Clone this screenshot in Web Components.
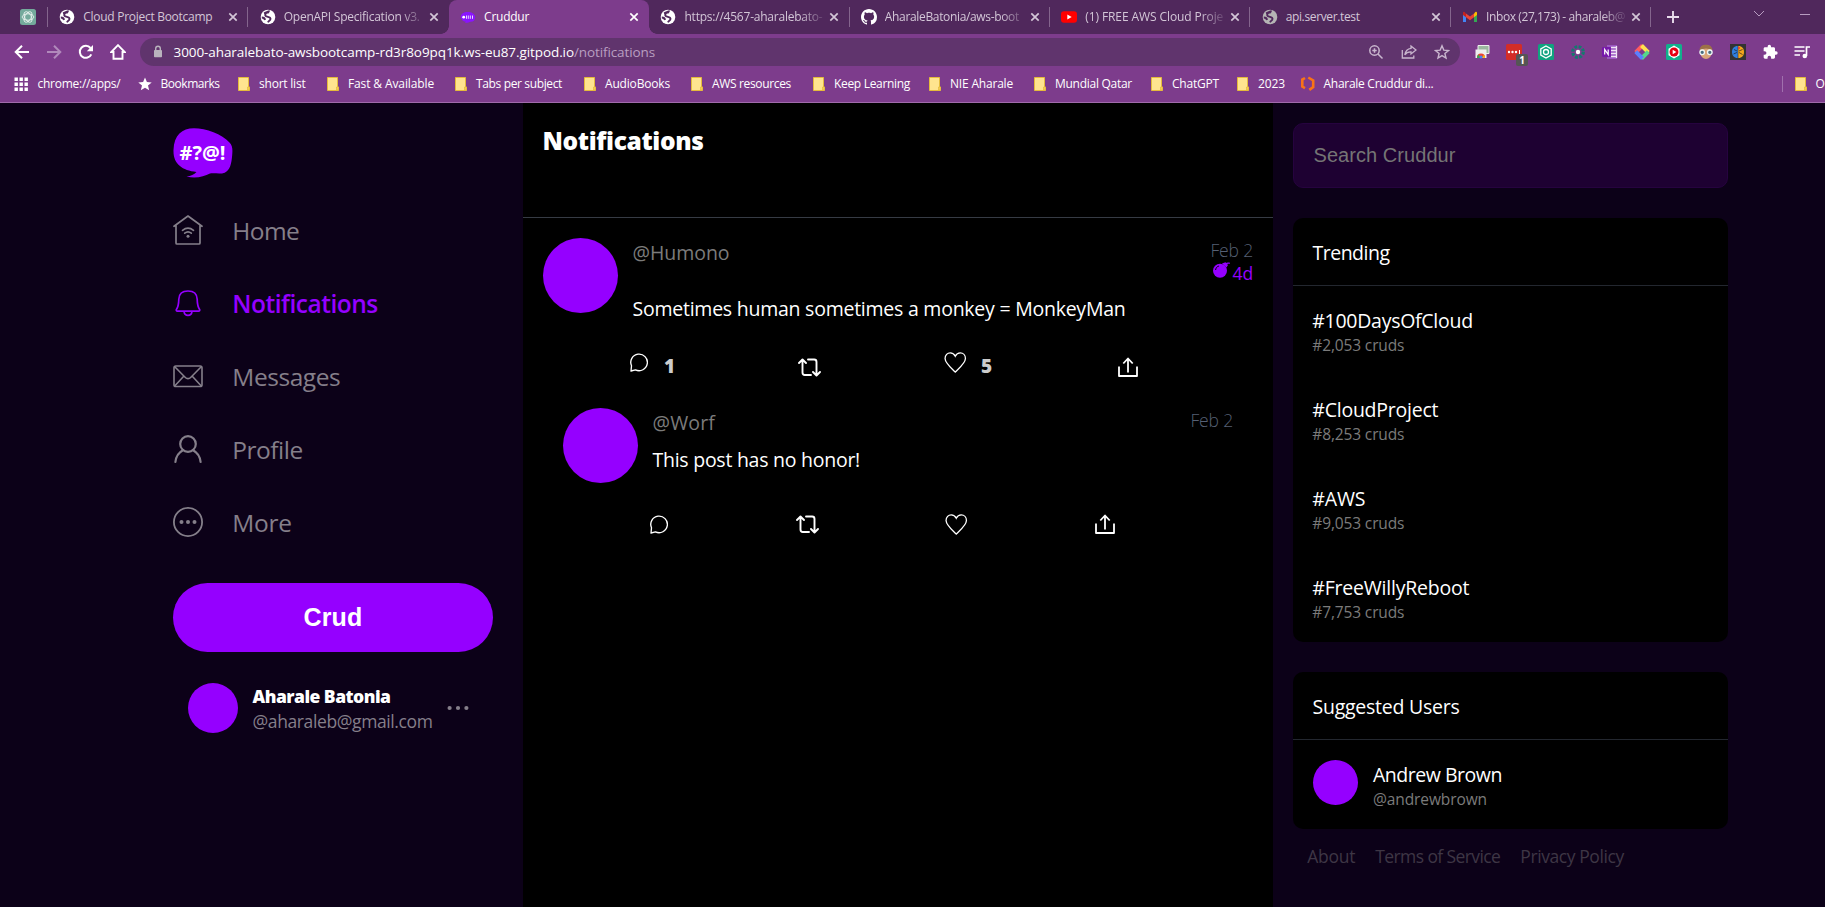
<!DOCTYPE html>
<html lang="en">
<head>
<meta charset="utf-8">
<title>Cruddur</title>
<style>
html,body{margin:0;height:100%;overflow:hidden;background:#000}
body{font-family:"Open Sans","Noto Sans",sans-serif;color:#fff}
</style>
</head>
<body>
<browser-window></browser-window>
<script>
const ICONS = {
  globe:'<svg viewBox="0 0 16 16"><circle cx="8" cy="8" r="7.300" fill="currentColor"/><path d="M4 4.300c2-.6 4-2 5.700-2M5.200 6.300C5 4 7 3.200 9 3.200M5.200 6.300c.8 2.100 5.300 1 5.300 3.500 0 2-1.800 1.800-2.500 3.500M1.800 8.500c2.300 0 3 1 3.200 2.500" fill="none" stroke="var(--hole,#50285c)" stroke-width="1.900"/></svg>',
  gpt:'<svg viewBox="0 0 16 16"><rect width="16" height="16" rx="2.500" fill="#74aa9c"/><g fill="none" stroke="#fff" stroke-width=".7"><ellipse cx="8" cy="8" rx="5.800" ry="3.200"/><ellipse cx="8" cy="8" rx="5.800" ry="3.200" transform="rotate(60 8 8)"/><ellipse cx="8" cy="8" rx="5.800" ry="3.200" transform="rotate(120 8 8)"/></g></svg>',
  crud:'<svg viewBox="0 0 16 16"><path d="M.8 7.500C1 4.500 4 3 7.500 3c4.500 0 7.800 2 7.700 5.500-.1 3-2 4.500-5 4.300-2 1.400-4 1-5.500.9l1.300-1C3 12.300.6 10.500.8 7.500z" fill="#8a14ff"/><circle cx="3.700" cy="8.200" r="1.400" fill="#fff"/><path d="M6.500 6.500v3.300M8.300 6.500v3.300M10.300 6.500v3.300M12.500 6.500v3.300" stroke="#e8d5ff" stroke-width="1"/></svg>',
  github:'<svg viewBox="0 0 16 16"><path fill="#fff" d="M8 0C3.580 0 0 3.580 0 8c0 3.540 2.290 6.530 5.470 7.590.4.070.55-.17.55-.38 0-.19-.01-.82-.01-1.490-2.010.37-2.530-.49-2.690-.94-.09-.23-.48-.94-.82-1.130-.28-.15-.68-.52-.01-.53.63-.01 1.080.58 1.230.82.72 1.210 1.870.87 2.330.66.07-.52.28-.87.51-1.070-1.780-.2-3.640-.89-3.640-3.950 0-.87.31-1.590.82-2.150-.08-.2-.36-1.020.08-2.120 0 0 .67-.21 2.200.82.64-.18 1.320-.27 2-.27s1.360.09 2 .27c1.530-1.040 2.200-.82 2.200-.82.44 1.100.16 1.920.08 2.120.51.56.82 1.270.82 2.150 0 3.070-1.870 3.750-3.650 3.950.29.25.54.73.54 1.480 0 1.070-.01 1.930-.01 2.200 0 .21.15.46.55.38A8.010 8.010 0 0 0 16 8c0-4.420-3.580-8-8-8z"/></svg>',
  youtube:'<svg viewBox="0 0 16 16"><rect y="2.200" width="16" height="11.600" rx="3" fill="#f00"/><path d="M6.300 5.500v5l4.400-2.500z" fill="#fff"/></svg>',
  gmail:'<svg viewBox="0 0 16 16"><path d="M1 4v9h3V7z" fill="#4285f4"/><path d="M15 4v9h-3V7z" fill="#34a853"/><path d="M1 3.500V6l3 2.300V4.500L2.600 3C1.800 2.600 1 3 1 3.500z" fill="#c5221f"/><path d="M4 4.500v3.800l4 3 4-3V4.500L8 7.600z" fill="#ea4335"/><path d="M15 3.500V6l-3 2.300V4.500L13.400 3c.8-.4 1.600 0 1.600.5z" fill="#fbbc04"/></svg>',
  close:'<svg viewBox="0 0 16 16"><path d="M4.300 4.300l7.400 7.400M11.700 4.300l-7.400 7.400" stroke="currentColor" stroke-width="1.700"/></svg>',
  plus:'<svg viewBox="0 0 16 16"><path d="M2 8h12M8 2v12" stroke="#e8dcec" stroke-width="1.900"/></svg>',
  chevron:'<svg viewBox="0 0 16 16"><path d="M3 5l5 5 5-5" fill="none" stroke="#b79cc0" stroke-width="1"/></svg>',
  minus:'<svg viewBox="0 0 16 16"><path d="M3 7.500h10" stroke="#b79cc0" stroke-width="1"/></svg>',
  back:'<svg viewBox="0 0 16 16"><path d="M15 8H2M8 1.700L1.700 8 8 14.300" fill="none" stroke="#fff" stroke-width="2"/></svg>',
  fwd:'<svg viewBox="0 0 16 16"><path d="M1 8h13M8 1.700L14.300 8 8 14.300" fill="none" stroke="#b189bb" stroke-width="2"/></svg>',
  reload:'<svg viewBox="0 0 16 16"><path d="M13.300 10.300A6 6 0 1 1 12.500 4" fill="none" stroke="#fff" stroke-width="2"/><path d="M15 1v6.200H8.800z" fill="#fff"/></svg>',
  home:'<svg viewBox="0 0 16 16"><path d="M8 1.200L1.300 8H3.500v6.800h9V8h2.200z" fill="none" stroke="#fff" stroke-width="1.900"/></svg>',
  lock:'<svg viewBox="0 0 16 16"><rect x="4" y="6" width="8" height="7.200" rx=".8" fill="#b9b3bd"/><path d="M5.700 7V4.600a2.300 2.300 0 0 1 4.600 0V7" fill="none" stroke="#b9b3bd" stroke-width="1.400"/></svg>',
  zoom:'<svg viewBox="0 0 16 16"><g fill="none" stroke="#c9b6ce" stroke-width="1.500"><circle cx="6.500" cy="6.500" r="4.700"/><path d="M10 10l4.500 4.500M4.300 6.500h4.400M6.500 4.300v4.400"/></g></svg>',
  share:'<svg viewBox="0 0 16 16"><g fill="none" stroke="#c9b6ce" stroke-width="1.300"><path d="M1.300 6v8h11.500v-2.500M10 2l5 4-5 4V7.800C7 7.700 5 8.800 3.800 10.800 4.500 7 6.500 4.700 10 4.300z"/></g></svg>',
  star:'<svg viewBox="0 0 16 16"><path d="M8 1.800l1.800 4.300 4.700.4-3.600 3 1.100 4.600L8 11.600l-4 2.500 1.100-4.600-3.600-3 4.700-.4z" fill="none" stroke="#c9b6ce" stroke-width="1.400"/></svg>',
  starf:'<svg viewBox="0 0 16 16"><path d="M8 1.500l1.900 4.500 4.800.4-3.700 3.200 1.200 4.700L8 11.800l-4.200 2.500L5 9.600 1.300 6.400 6.100 6z" fill="#fff"/></svg>',
  e1:'<svg viewBox="0 0 16 16"><path d="M4 1.500h11v8H4z" fill="#9bb89f" stroke="#eee"/><path d="M1.500 5.500h11v8.500h-11z" fill="#eee"/><path d="M3 13.500a4 4 0 0 1 8 0z" fill="#ea4335"/><path d="M3 13.500a4 4 0 0 1 1.500-3l2 3.500H3z" fill="#34a853"/><path d="M8 13.800l2-3a4 4 0 0 1 1 3z" fill="#fbbc04"/><circle cx="7" cy="13" r="1.500" fill="#4285f4"/></svg>',
  e2:'<svg viewBox="0 0 16 16"><rect width="16" height="16" rx="1.500" fill="#d32d27"/><circle cx="3" cy="8" r="1.200" fill="#fff"/><circle cx="6.500" cy="8" r="1.200" fill="#fff"/><circle cx="10" cy="8" r="1.200" fill="#fff"/><path d="M13.500 6v4" stroke="#fff"/></svg>',
  e3:'<svg viewBox="0 0 16 16"><rect width="16" height="16" rx="1.500" fill="#10a37f"/><g fill="none" stroke="#fff" stroke-width="1.300"><path d="M8 2l5.200 3v6L8 14l-5.200-3V5z"/><circle cx="8" cy="8" r="2.500"/></g></svg>',
  e4:'<svg viewBox="0 0 16 16"><circle cx="8" cy="8" r="5.300" fill="none" stroke="#14796f" stroke-width="3.200" stroke-dasharray="2.700 1.460"/><circle cx="8" cy="8" r="2.200" fill="#fff"/></svg>',
  e5:'<svg viewBox="0 0 16 16"><path d="M5 1h10v14H5z" fill="#9a57c0"/><path d="M9 3.500h5M9 6.500h5M9 9.500h5M9 12.500h5M14.500 2v12" stroke="#f0e6f5" stroke-width="1.300"/><rect y="3" width="9" height="10" rx="1" fill="#7719aa"/><path d="M2.700 10.500v-5l3.500 5v-5" fill="none" stroke="#fff" stroke-width="1.200"/></svg>',
  e6:'<svg viewBox="0 0 16 16"><g fill="none" stroke-width="4"><path d="M8.500 1.500L1.700 8.300" stroke="#ff5a5f"/><path d="M7.500 1.500L14.300 8.300" stroke="#ffe14d"/><path d="M14.300 7.700L7.500 14.500" stroke="#54d98c"/><path d="M8.500 14.500L1.700 7.700" stroke="#5b7fff"/></g></svg>',
  e7:'<svg viewBox="0 0 16 16"><rect width="16" height="16" rx="1.500" fill="#10b08c"/><path d="M8 1.500l5.500 3.200v6.600L8 14.500l-5.500-3.200V4.700z" fill="#fff"/><circle cx="8" cy="8" r="4.500" fill="#e60012"/><path d="M6.700 5.800v4.400L10.300 8z" fill="#fff"/></svg>',
  e8:'<svg viewBox="0 0 16 16"><path d="M2 7a6 6 0 0 1 12 0c0 5-3 8-6 8S2 12 2 7z" fill="#d9a679"/><path d="M1.500 6C2 2 5 .8 8 .8S14 2 14.500 6C10 4 6 4 1.500 6z" fill="#9b7048"/><g fill="#4a6f80" stroke="#eef5f5" stroke-width="1.300"><circle cx="4.200" cy="8.300" r="2.300"/><circle cx="11.800" cy="8.300" r="2.300"/></g></svg>',
  e9:'<svg viewBox="0 0 16 16"><rect width="16" height="16" fill="#333"/><path d="M7.700 2C4 2 2 4.500 2 8s2 6 5.700 6z" fill="#2f7fe0"/><path d="M8.300 2C12 2 14 4.500 14 8s-2 6-5.700 6z" fill="#f3a51c"/><path d="M4 5.500l3 1.500M3.500 10l3.500-1.500M12.500 5.500L9 7M12.500 10.500L9 8.500" stroke="#222" stroke-width=".7"/><circle cx="9" cy="4" r="1" fill="#e33"/></svg>',
  puzzle:'<svg viewBox="0 0 24 24"><path fill="#fff" d="M21 11h-1.500V7c0-1.100-.9-2-2-2h-4V3.500a2.500 2.500 0 0 0-5 0V5h-4c-1.100 0-2 .9-2 2v3.800H4a2.700 2.700 0 0 1 0 5.400H2.500V20c0 1.100.9 2 2 2h3.800v-1.500a2.700 2.700 0 0 1 5.400 0V22h3.800c1.100 0 2-.9 2-2v-4H21a2.500 2.500 0 0 0 0-5z"/></svg>',
  media:'<svg viewBox="0 0 16 16"><g fill="none" stroke="#fff" stroke-width="1.700"><path d="M.5 3h10M.5 7h10M.5 11h5.500M12.500 12V3h3.500"/></g><circle cx="10.800" cy="12" r="2.300" fill="#fff"/></svg>',
  apps:'<svg viewBox="0 0 16 16"><path fill="#fff" d="M1.500 1.500h3.400v3.400H1.500zM6.500 1.500h3.400v3.400H6.500zM11.500 1.500h3.400v3.400h-3.400zM1.500 6.500h3.400v3.400H1.500zM6.500 6.500h3.400v3.400H6.500zM11.500 6.500h3.400v3.400h-3.400zM1.500 11.500h3.400v3.400H1.500zM6.500 11.500h3.400v3.400H6.500zM11.500 11.500h3.400v3.400h-3.400z"/></svg>',
  folder:'<svg viewBox="0 0 16 16"><path d="M2.500 1.500h10v9.500h1v3.500h-11z" fill="#ffe48f" stroke="#e5bb3c"/><path d="M11.500 14v-3h2v3z" fill="#f4cd55" stroke="#e5bb3c" stroke-width=".7"/></svg>',
  hive:'<svg viewBox="0 0 16 16"><path d="M5 2L2.300 3.600v6.900l2.700 1.600M8.300 1.500l4.900 2.900v6.700L9.300 13.900" fill="none" stroke="#f97316" stroke-width="2.600"/></svg>',
  nhome:'<svg viewBox="0 0 30 30"><g fill="none" stroke="currentColor" stroke-width="1.700" stroke-linejoin="round" stroke-linecap="round"><path d="M1 11.300L15 1l14 10.300M3 10.500V28c0 .7.400 1 1 1h22c.6 0 1-.3 1-1V10.500"/><path d="M9.500 15.300c3.500-2.700 7.500-2.700 11 0M11.700 18.200c2-1.600 4.600-1.600 6.600 0"/></g><circle cx="15" cy="21.300" r="1.500" fill="currentColor"/></svg>',
  nbell:'<svg viewBox="0 0 30 30"><g fill="none" stroke="currentColor" stroke-width="1.700" stroke-linejoin="round"><path d="M5.800 11.200C6 6 9.500 3 15 3s9 3 9.200 8.200c.1 5.300.8 8 2.400 10.300.4.800 0 1.700-1 1.700H4.400c-1 0-1.400-.9-1-1.700 1.600-2.300 2.300-5 2.400-10.300zM11 23.300c.3 2.700 1.800 4 4 4s3.700-1.300 4-4"/></g></svg>',
  nmail:'<svg viewBox="0 0 30 30"><g fill="none" stroke="currentColor" stroke-width="1.600" stroke-linejoin="round"><rect x="1" y="5" width="28" height="20.500" rx="1.800"/><path d="M1.500 5.500l10.600 10.700c1.800 1.900 4 1.900 5.800 0L28.500 5.500M1.700 25l9-9.700M28.300 25l-9-9.700"/></g></svg>',
  nuser:'<svg viewBox="0 0 30 30"><g fill="none" stroke="currentColor" stroke-width="2.200" stroke-linecap="round"><circle cx="15" cy="10" r="7.800"/><path d="M2.400 28C3 22.300 5.600 18.500 9.900 16.200M27.600 28C27 22.300 24.400 18.500 20.100 16.200"/></g></svg>',
  nmore:'<svg viewBox="0 0 30 30"><circle cx="15" cy="15" r="14.100" fill="none" stroke="currentColor" stroke-width="1.800"/><g fill="currentColor"><circle cx="8.500" cy="15" r="2"/><circle cx="15" cy="15" r="2"/><circle cx="21.500" cy="15" r="2"/></g></svg>',
  dots:'<svg viewBox="0 0 22 6"><g fill="currentColor"><circle cx="2.600" cy="3" r="2.100"/><circle cx="11" cy="3" r="2.100"/><circle cx="19.400" cy="3" r="2.100"/></g></svg>',
  comment:'<svg viewBox="0 0 18 19"><path d="M1 18l.5-5.200A8.300 8.300 0 1 1 5.500 16.900z" fill="none" stroke="#fff" stroke-width="1.350" stroke-linejoin="round"/></svg>',
  repost:'<svg viewBox="0 0 23 19"><g fill="none" stroke="#fff" stroke-width="1.900" stroke-linejoin="round" stroke-linecap="round"><path d="M1 5l3.500-3.500L8 5M4.500 2v12.500c0 1.700.8 2.500 2.300 2.500H13M10 1.500h6.200c1.500 0 2.300.8 2.300 2.500v12.500M15 14l3.500 3.500L22 14"/></g></svg>',
  heart:'<svg viewBox="0 0 22 21"><path d="M11 20C8 16.800 1 11.500.8 6.500.8 3 3.200.8 6 .8c2.500 0 4 1.400 5 3.400 1-2 2.500-3.400 5-3.400 2.800 0 5.200 2.200 5.200 5.700C21 11.500 14 16.800 11 20z" fill="none" stroke="#fff" stroke-width="1.300"/></svg>',
  up:'<svg viewBox="0 0 20 20"><path d="M1 9.500V19h18V9.500M10 15.500V2M5.300 6.500L10 1.500l4.700 5" fill="none" stroke="#fff" stroke-width="1.800" stroke-linejoin="round"/></svg>',
  bomb:'<svg viewBox="0 0 17 16"><circle cx="7" cy="8.800" r="7" fill="#9500ff"/><path d="M9 1.500l4.500 4 1.500-2.500-2.500-2.800z" fill="#9500ff"/><path d="M13 2c1-1.500 2-1 3.800-.7" fill="none" stroke="#9500ff" stroke-width="1.300"/><path d="M2.600 8c.2-2 1.400-3.500 3.300-4" fill="none" stroke="#000" stroke-width="1"/></svg>'
};

function define(name, css, html, ready) {
  customElements.define(name, class extends HTMLElement {
    connectedCallback() {
      if (this.shadowRoot) return;
      const root = this.attachShadow({mode: 'open'});
      const body = typeof html === 'function' ? html(this) : html;
      root.innerHTML = `<style>*{box-sizing:border-box}${css}</style>${body}`;
      if (ready) ready(this, root);
    }
  });
}
const at = (el, n, d = '') => el.getAttribute(n) ?? d;

/* Single-line label; "w" is the width its letters are tracked to. */
define('fit-text', ':host{display:block;white-space:nowrap}span{display:inline-block;line-height:inherit;vertical-align:top}', '<span><slot></slot></span>',
  (el, root) => {
    const w = +at(el, 'w', 0), s = root.querySelector('span');
    if (w) s.style.letterSpacing = ((w - s.getBoundingClientRect().width) / el.textContent.length).toFixed(3) + 'px';
  });

define('ui-icon', ':host{display:block;flex:none;width:16px;height:16px}svg{display:block;width:100%;height:100%}', el => ICONS[at(el, 'name')]);
define('ui-avatar', ':host{display:block;flex:none;border-radius:50%;background:#9500ff;width:var(--size);height:var(--size)}', '');

define('browser-tab', `
:host{display:flex;align-items:center;width:200.4px;flex:none;height:34px;padding-left:11.300px;color:#d3c6d7;font-size:12px;line-height:34px;position:relative}
:host([sep])::after{content:"";width:1px;height:20px;background:#84658d;margin-left:auto}
:host([active]){background:#7d3c8c;color:#fff;border-radius:8px 8px 0 0}
:host([active])::before,:host([active]) i{content:"";position:absolute;bottom:0;width:8px;height:8px}
:host([active])::before{left:-8px;background:radial-gradient(circle at 0 0,transparent 7.5px,#7d3c8c 8px)}
:host([active]) i{right:-8px;background:radial-gradient(circle at 100% 0,transparent 7.5px,#7d3c8c 8px)}
.t{width:140px;margin:0 2px 0 8px;overflow:hidden}
:host([fade]) .t{-webkit-mask:linear-gradient(90deg,#000 116px,rgba(0,0,0,.15) 139px)}`,
 el => `<ui-icon name="${at(el,'icon')}" style="${at(el,'tint')}"></ui-icon><div class="t"><fit-text w="${at(el,'w')}">${at(el,'label')}</fit-text></div><ui-icon name="close"></ui-icon><i></i>`);

define('tab-strip', ':host{display:flex;height:34px;background:#50285c}.p{width:48px;display:flex;align-items:center;padding-left:20px}.p::after{content:"";width:1px;height:20px;background:#84658d;margin-left:11px}.e{display:flex;align-items:center;padding-left:13.500px}',
`<div class="p"><ui-icon name="gpt"></ui-icon></div>
<browser-tab icon="globe" label="Cloud Project Bootcamp" w="129" tint="color:#fff" sep></browser-tab>
<browser-tab icon="globe" label="OpenAPI Specification v3." w="136" tint="color:#fff" fade></browser-tab>
<browser-tab icon="crud" label="Cruddur" w="45" active></browser-tab>
<browser-tab icon="globe" label="https://4567-aharalebato-" w="138" tint="color:#fff" fade sep></browser-tab>
<browser-tab icon="github" label="AharaleBatonia/aws-boot" w="134" fade sep></browser-tab>
<browser-tab icon="youtube" label="(1) FREE AWS Cloud Proje" w="138" fade sep></browser-tab>
<browser-tab icon="globe" label="api.server.test" w="74" tint="color:#b5b5b5" sep></browser-tab>
<browser-tab icon="gmail" label="Inbox (27,173) - aharaleb@" w="139" fade sep></browser-tab>
<div class="e"><ui-icon name="plus"></ui-icon><ui-icon name="chevron" style="margin:-6px 0 0 70px"></ui-icon><ui-icon name="minus" style="margin:-4px 0 0 30px"></ui-icon></div>`);

define('address-bar', `
:host{display:flex;height:36px;align-items:center}
.n{display:flex;gap:16px;padding:0 14px;width:140px}
.o{display:flex;width:1320px;height:28px;border-radius:14px;background:#60346d;align-items:center;padding:0 10px;font-size:13.500px;line-height:28px}
.o fit-text+fit-text{color:#b99fc1}
.r{display:flex;gap:17px;margin-left:auto}
.x{display:flex;gap:16px;margin-left:14px}.b{position:relative}
.b span{position:absolute;left:10px;top:10px;width:12px;height:12px;border-radius:2px;background:#555;font:bold 10px/12px "Open Sans",sans-serif;text-align:center}`,
`<div class="n"><ui-icon name="back"></ui-icon><ui-icon name="fwd"></ui-icon><ui-icon name="reload"></ui-icon><ui-icon name="home"></ui-icon></div>
<div class="o"><ui-icon name="lock"></ui-icon><fit-text w="400.500" style="margin-left:7.500px">3000-aharalebato-awsbootcamp-rd3r8o9pq1k.ws-eu87.gitpod.io</fit-text><fit-text w="81">/notifications</fit-text>
<div class="r"><ui-icon name="zoom"></ui-icon><ui-icon name="share"></ui-icon><ui-icon name="star"></ui-icon></div></div>
<div class="x"><ui-icon name="e1"></ui-icon><div class="b"><ui-icon name="e2"></ui-icon><span>1</span></div>${['e3','e4','e5','e6','e7','e8','e9','puzzle','media'].map(n=>`<ui-icon name="${n}"></ui-icon>`).join('')}</div>`);

/* icon, label, label width, distance to the next icon, icon-to-label gap */
const MARKS = [['apps','chrome://apps/',83,123.500,8.500],['starf','Bookmarks',59,99,8],['folder','short list',46.500,89,7.500],['folder','Fast &amp; Available',86,128,7.500],['folder','Tabs per subject',86,129,7.500],['folder','AudioBooks',65,107,7.500],['folder','AWS resources',79,122,7.500],['folder','Keep Learning',76,116,7.500],['folder','NIE Aharale',63,105,7.500],['folder','Mundial Qatar',77,117,7.500],['folder','ChatGPT',47,86,7.500],['folder','2023',27,65.500,7.500],['hive','Aharale Cruddur di...',110,150,7.500]];
define('bookmark-bar', `
:host{display:flex;height:32px;padding:0 0 0 13px;font-size:12px;font-weight:500;line-height:30px;overflow:hidden}
div{display:flex;align-items:center;flex:none;height:28px}
.l{margin-left:auto;width:43.500px}.l i{flex:none;width:1px;height:16px;background:#a070ad;margin-right:10px}`,
 MARKS.map(m=>`<div style="width:${m[3]}px;gap:${m[4]}px"><ui-icon name="${m[0]}"></ui-icon><fit-text w="${m[2]}">${m[1]}</fit-text></div>`).join('') +
 `<div class="l"><i></i><ui-icon name="folder"></ui-icon><fit-text style="margin-left:7px">O</fit-text></div>`);

define('browser-chrome', ':host{display:block;box-sizing:border-box;height:103px;background:#7d3c8c;border-bottom:1px solid #a06bab}', '<tab-strip></tab-strip><address-bar></address-bar><bookmark-bar></bookmark-bar>');

define('nav-item', ':host{display:flex;align-items:center;height:73px;color:#857f8a;font-size:24.500px;line-height:30px}:host([active]){color:#9500ff;font-weight:600}ui-icon{width:30px;height:30px;margin:-1px 29.300px 0 0}',
 el => `<ui-icon name="${at(el,'icon')}"></ui-icon><fit-text w="${at(el,'w')}">${at(el,'label')}</fit-text>`);

define('cruddur-logo', ':host{display:block;width:60px;height:50px}svg{display:block}text{font:700 20px "Open Sans",sans-serif;fill:#fff}',
 '<svg width="60" height="50" viewBox="0 0 60 50"><path d="M.5 22C1 7 9 .3 21 .3c12 0 28 6 35.500 14.200 3 3.300 3.200 6.500 2.700 12.500-.8 9-2 15-7.500 17.700-4.500 1.800-9.500.2-14.700.8C31 48.500 23 51 13.500 48.600c4.500-.8 7.500-2 10-4.600C9 42.500 0 36 .5 22z" fill="#9500ff"/><text x="6.500" y="32" textLength="46" lengthAdjust="spacingAndGlyphs">#?@!</text></svg>');

define('side-nav', `
:host{display:block;width:523px;background:#0c0118;padding:25px 30px 0 173px}
nav{margin-top:16px}
.c{display:flex;align-items:center;justify-content:center;margin-top:24px;height:69px;padding-bottom:2px;width:320px;border-radius:35px;background:#9500ff;font:bold 25px/30px "Liberation Sans",sans-serif}
.p{display:flex;align-items:center;margin:30px 0 0 15px;line-height:25px;font-size:17.500px;color:#857f8a}
.p div{width:194px;padding:2px 0 0 14.500px}.p b{color:#fff;font-weight:800}
.p ui-icon{width:22px;height:6px}`,
`<cruddur-logo></cruddur-logo>
<nav><nav-item icon="nhome" label="Home" w="67"></nav-item><nav-item icon="nbell" label="Notifications" w="145.500" active></nav-item><nav-item icon="nmail" label="Messages" w="108"></nav-item><nav-item icon="nuser" label="Profile" w="70.500"></nav-item><nav-item icon="nmore" label="More" w="59.500"></nav-item></nav>
<div class="c"><fit-text w="59">Crud</fit-text></div>
<div class="p"><ui-avatar style="--size:50px"></ui-avatar><div><b><fit-text w="138">Aharale Batonia</fit-text></b><fit-text w="180">@aharaleb@gmail.com</fit-text></div><ui-icon name="dots" style="margin-left:14.500px"></ui-icon></div>`);

define('crud-post', `
:host{display:flex;gap:14.500px;padding:20px 20px 0;font-size:19.500px;line-height:24px;height:170px;box-sizing:border-box}
.b{flex:1;padding-top:3px}.h{display:flex;justify-content:space-between;height:24px;color:#7b7b7b}
.d{font-size:17.500px;line-height:20px;font-weight:300;color:#566075;display:flex;flex-direction:column;align-items:flex-end;margin-top:-1px}
.e{display:flex;color:#9500ff;font-weight:400;margin-top:3px;gap:2px}.e ui-icon{width:17px;height:16px;margin:-1px 1px 0 0}
.a{display:grid;margin-left:-2.500px;align-items:start}.a div{display:flex}
.a fit-text{font-weight:800;color:#ccc;font-size:19px}`,
 el => { const r = el.hasAttribute('reply');
  const ic = (n,w,h,mt) => `<ui-icon name="${n}" style="width:${w}px;height:${h}px;margin-top:${mt}px"></ui-icon>`;
  const cnt = (n,ml) => n ? `<fit-text style="margin:2px 0 0 ${ml}px">${n}</fit-text>` : '';
  return `<ui-avatar style="--size:75px"></ui-avatar><div class="b">
<div class="h"><fit-text w="${at(el,'hw')}">${at(el,'handle')}</fit-text><div class="d"><fit-text w="42.500">Feb 2</fit-text>${r?'':'<div class="e"><ui-icon name="bomb"></ui-icon><fit-text w="20.500">4d</fit-text></div>'}</div></div>
<div style="margin-top:${r?13:32}px"><fit-text w="${at(el,'w')}"><slot></slot></fit-text></div>
<div class="a" style="margin-top:${r?42:31}px;grid-template-columns:${r?'146px 149px 150px':'168px 146px 174px'} auto"><div>${ic('comment',18,19,1)}${cnt(at(el,'replies'),16)}</div><div>${ic('repost',23,19,r?1:6)}</div><div>${ic('heart',22.500,21,0)}${cnt(at(el,'likes'),14.500)}</div><div>${ic('up',20,20,r?0:5)}</div></div></div>`; },
 (el, root) => {
  /* the message arrives through the slot, so it is tracked from the post itself */
  const s = root.querySelector('slot').parentNode.shadowRoot.querySelector('span');
  s.style.letterSpacing = '0';
  s.style.letterSpacing = ((+at(el,'w') - s.getBoundingClientRect().width) / el.textContent.length).toFixed(3) + 'px';
 });

define('notification-feed', ':host{display:block;width:750px;background:#000}header{height:115px;padding:23px 20px 0 19.500px;border-bottom:1px solid #363b44;font-size:24.500px;line-height:30px;font-weight:800}',
`<header><fit-text w="161">Notifications</fit-text></header>
<crud-post handle="@Humono" hw="97" w="493" replies="1" likes="5">Sometimes human sometimes a monkey = MonkeyMan</crud-post>
<crud-post handle="@Worf" hw="62.500" w="207.500" reply style="margin:0 20px">This post has no honor!</crud-post>`);

define('side-card', ':host{display:block;background:#000;border-radius:10px;margin-top:30px;font-size:19.500px;line-height:24px}header{height:68px;padding:23px 19.500px 0;border-bottom:1px solid #23272f}',
 el => `<header><fit-text w="${at(el,'w')}">${at(el,'label')}</fit-text></header><slot></slot>`);
define('trend-item', ':host{display:block;box-sizing:border-box;height:89px;padding:23px 19.300px 0}div{font-size:15.500px;line-height:20px;color:#7b7b7b;margin-top:2px}',
 el => `<fit-text w="${at(el,'w')}">${at(el,'label')}</fit-text><div><fit-text w="92">${at(el,'count')}</fit-text></div>`);
define('user-item', ':host{display:flex;box-sizing:border-box;gap:15px;height:89px;padding:20px}.n{padding-top:3px}.n div{font-size:15.500px;line-height:20px;color:#7b7b7b;margin-top:2px}',
 '<ui-avatar style="--size:45px"></ui-avatar><div class="n"><fit-text w="129">Andrew Brown</fit-text><div><fit-text w="114">@andrewbrown</fit-text></div></div>');

define('right-rail', `
:host{display:block;flex:1;background:#0c0118;padding:20px 97px 0 20px}
.s{height:65px;border-radius:10px;border:1px solid #26033f;background:#1e0132;padding:0 19.500px;font:20px/62px "Liberation Sans",sans-serif;color:#757575}
footer{display:flex;gap:20px;padding:15px 0 0 14.300px;font-size:17.500px;line-height:24px;color:#3e3645}`,
`<div class="s"><fit-text w="142">Search Cruddur</fit-text></div>
<side-card label="Trending" w="77"><trend-item label="#100DaysOfCloud" w="160.500" count="#2,053 cruds"></trend-item><trend-item label="#CloudProject" w="126" count="#8,253 cruds"></trend-item><trend-item label="#AWS" w="53" count="#9,053 cruds"></trend-item><trend-item label="#FreeWillyReboot" w="157" count="#7,753 cruds"></trend-item></side-card>
<side-card label="Suggested Users" w="147"><user-item></user-item></side-card>
<footer><fit-text w="48">About</fit-text><fit-text w="125">Terms of Service</fit-text><fit-text w="103.500">Privacy Policy</fit-text></footer>`);

define('browser-window', ':host{display:flex;flex-direction:column;width:1825px;height:907px;overflow:hidden}main{display:flex;flex:1}side-nav,notification-feed,right-rail{box-sizing:border-box}', '<browser-chrome></browser-chrome><main><side-nav></side-nav><notification-feed></notification-feed><right-rail></right-rail></main>');
</script>
</body>
</html>
